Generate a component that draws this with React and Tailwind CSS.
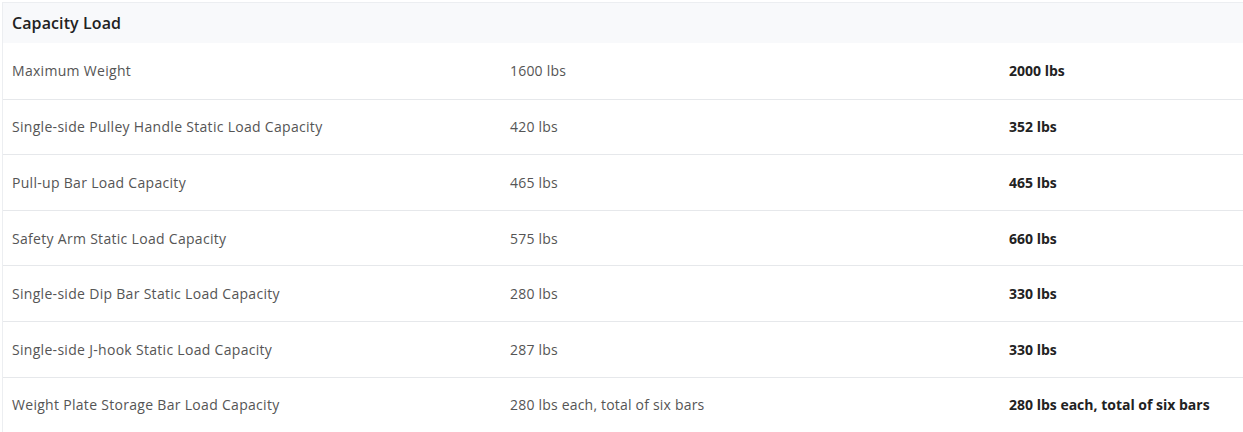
const rows = [
  ['Maximum Weight', '1600 lbs', '2000 lbs'],
  ['Single-side Pulley Handle Static Load Capacity', '420 lbs', '352 lbs'],
  ['Pull-up Bar Load Capacity', '465 lbs', '465 lbs'],
  ['Safety Arm Static Load Capacity', '575 lbs', '660 lbs'],
  ['Single-side Dip Bar Static Load Capacity', '280 lbs', '330 lbs'],
  ['Single-side J-hook Static Load Capacity', '287 lbs', '330 lbs'],
  ['Weight Plate Storage Bar Load Capacity', '280 lbs each, total of six bars', '280 lbs each, total of six bars'],
]

export default function App() {
  return (
    <div className="h-[432px] w-[1243px] overflow-hidden bg-white pl-[2px] pt-[2px] font-['Open_Sans',sans-serif]">
      <div className="w-[1600px] border-l border-t border-[#eceef1]">
        <div className="flex h-[40px] items-center bg-[#f8f9fb] px-[9px]">
          <h3 className="text-[16px] font-semibold tracking-[0.1px] text-[#222]">Capacity Load</h3>
        </div>
        {rows.map(([label, a, b], i) => (
          <div
            key={label}
            className={`grid h-[55.6px] grid-cols-[498px_499px_1fr] items-center text-[14px] ${
              i > 0 ? 'border-t border-[#e6e8eb]' : ''
            }`}
          >
            <div className="px-[9px] tracking-[0.3px] text-[#555]">{label}</div>
            <div className="px-[9px] tracking-[0.2px] text-[#555]">{a}</div>
            <div className="px-[9px] font-bold text-[#222]">{b}</div>
          </div>
        ))}
      </div>
    </div>
  )
}
